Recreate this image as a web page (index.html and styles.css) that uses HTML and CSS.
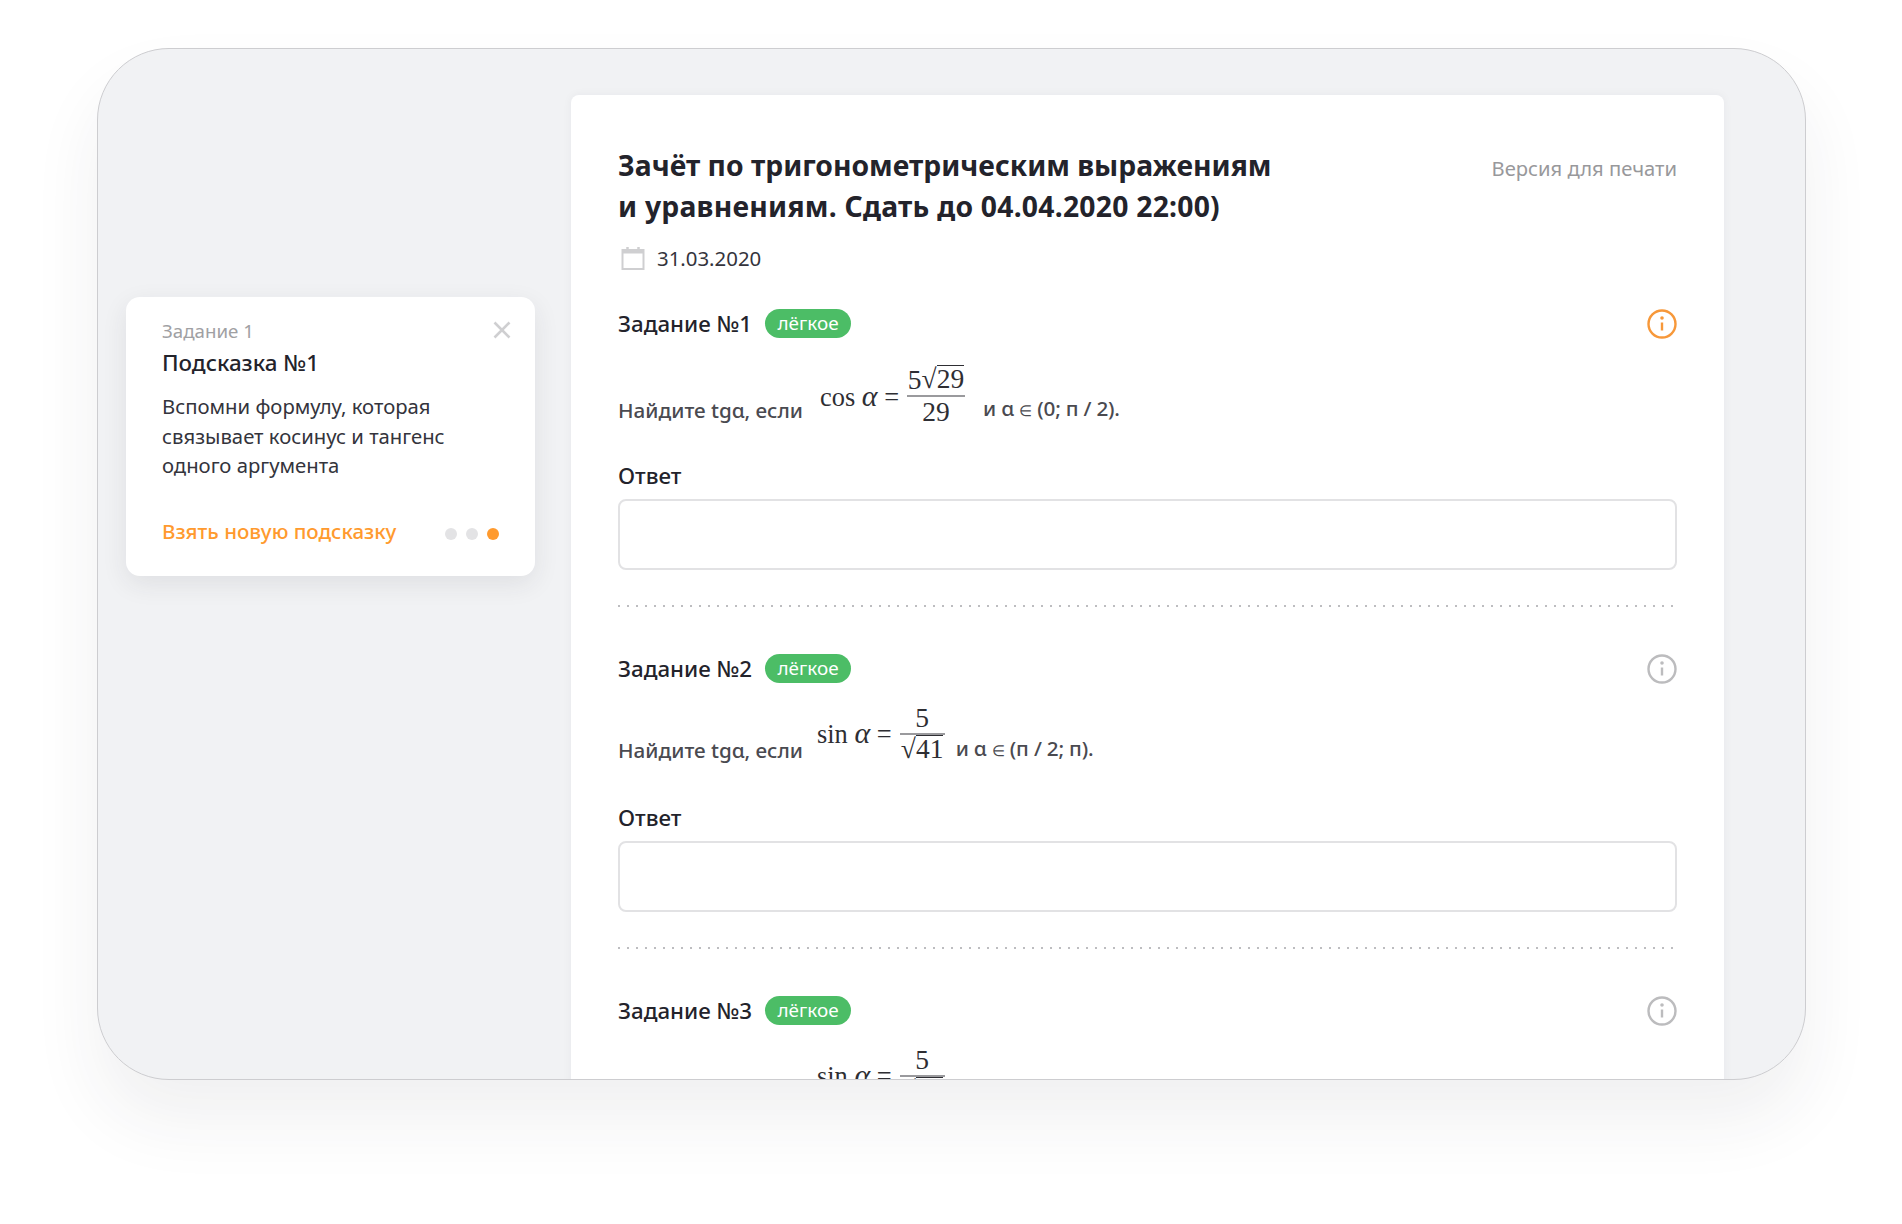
FILE: index.html
```html
<!DOCTYPE html>
<html lang="ru">
<head>
<meta charset="utf-8">
<title>Зачёт</title>
<link rel="stylesheet" href="styles.css">
</head>
<body>
<div class="frame">
  <aside class="side">
    <div class="hint">
      <div class="hint-top">
        <div class="hint-sub">Задание 1</div>
        <svg class="close" viewBox="0 0 18 18"><path d="M1.5 1.5l15 15M16.500 1.500l-15 15"/></svg>
      </div>
      <div class="hint-title">Подсказка №1</div>
      <p class="hint-text">Вспомни формулу, которая<br>связывает косинус и тангенс<br>одного аргумента</p>
      <div class="hint-foot">
        <span class="hint-link">Взять новую подсказку</span>
        <span class="dots"><i class="dot"></i><i class="dot"></i><i class="dot on"></i></span>
      </div>
    </div>
  </aside>
  <main class="panel">
    <header class="head">
      <h1 class="title">Зачёт по тригонометрическим выражениям<br><span class="title-second">и уравнениям. Сдать до 04.04.2020 22:00)</span></h1>
      <span class="print">Версия для печати</span>
    </header>
    <div class="date">
      <svg class="cal" viewBox="0 0 24 24"><path d="M1.500 4h21v19h-21z" class="cal-body"/><path d="M1.500 6h21" class="cal-band"/><path d="M6.500 1v4.500M17.500 1v4.500" class="cal-ring"/></svg>
      <span>31.03.2020</span>
    </div>

    <section class="task first">
      <div class="task-head">
        <span class="task-name">Задание №1</span><span class="badge">лёгкое</span>
        <svg class="info orange" viewBox="0 0 30 30"><circle cx="15" cy="15" r="13.500"/><path d="M15 13.500v8"/><circle class="info-dot" cx="15" cy="9" r="1.800"/></svg>
      </div>
      <div class="problem p1">
        <span class="ptext w1">Найдите tgα, если</span>
        <span class="formula f1">
          <span class="fn">cos <em>α</em> =</span>
          <span class="frac"><span class="num">5<span class="root">√</span><span class="rad">29</span></span><span class="den">29</span></span>
        </span>
        <span class="ptext w2">и α <span class="el">∈</span> (0; п / 2).</span>
      </div>
      <div class="label">Ответ</div>
      <div class="input"></div>
    </section>

    <section class="task">
      <div class="task-head">
        <span class="task-name">Задание №2</span><span class="badge">лёгкое</span>
        <svg class="info" viewBox="0 0 30 30"><circle cx="15" cy="15" r="13.500"/><path d="M15 13.500v8"/><circle class="info-dot" cx="15" cy="9" r="1.800"/></svg>
      </div>
      <div class="problem p2">
        <span class="ptext w3">Найдите tgα, если</span>
        <span class="formula f2">
          <span class="fn">sin <em>α</em> =</span>
          <span class="frac"><span class="num">5</span><span class="den"><span class="root">√</span><span class="rad">41</span></span></span>
        </span>
        <span class="ptext w4">и α <span class="el">∈</span> (п / 2; п).</span>
      </div>
      <div class="label">Ответ</div>
      <div class="input"></div>
    </section>

    <section class="task">
      <div class="task-head">
        <span class="task-name">Задание №3</span><span class="badge">лёгкое</span>
        <svg class="info" viewBox="0 0 30 30"><circle cx="15" cy="15" r="13.500"/><path d="M15 13.500v8"/><circle class="info-dot" cx="15" cy="9" r="1.800"/></svg>
      </div>
      <div class="problem p2">
        <span class="ptext w3">&nbsp;</span>
        <span class="formula f2">
          <span class="fn">sin <em>α</em> =</span>
          <span class="frac"><span class="num">5</span><span class="den"><span class="root">√</span><span class="rad">41</span></span></span>
        </span>
      </div>
    </section>
  </main>
</div>
</body>
</html>
```

FILE: styles.css
```css
* { box-sizing: border-box; }
html, body { margin: 0; padding: 0; }
body {
  width: 1902px;
  height: 1224px;
  background: #fff;
  font-family: "Noto Sans", "Open Sans", sans-serif;
  color: #23232b;
  overflow: hidden;
  padding: 48px 0 0 97px;
}
.frame {
  width: 1709px;
  height: 1032px;
  background: #f1f2f4;
  border: 1px solid #cdcdd0;
  border-radius: 72px;
  box-shadow: 0 40px 70px rgba(40, 44, 60, .07);
  overflow: hidden;
  display: flex;
}
.side {
  width: 473px;
  padding: 248px 0 0 28px;
  flex: none;
}
.hint {
  width: 409px;
  height: 279px;
  background: #fff;
  border-radius: 14px;
  box-shadow: 0 8px 26px rgba(40, 44, 60, .09);
  padding: 22px 36px 0;
}
.hint-top {
  display: flex;
  justify-content: space-between;
  align-items: flex-start;
}
.hint-sub {
  font-size: 18.700px;
  line-height: 24px;
  color: #a0a0a3;
}
.close {
  width: 18px;
  height: 18px;
  margin: 2px -12px 0 0;
  flex: none;
}
.close path {
  fill: none;
  stroke: #cfcfd1;
  stroke-width: 2.600;
}
.hint-title {
  font-size: 22.400px;
  font-weight: 500;
  line-height: 30px;
  margin-top: 5px;
}
.hint-text {
  margin: 14px 0 0;
  font-size: 20.300px;
  line-height: 29.600px;
  color: #34343c;
}
.hint-foot {
  display: flex;
  justify-content: space-between;
  align-items: center;
  margin-top: 35px;
}
.hint-link {
  font-size: 20.500px;
  font-weight: 500;
  line-height: 30px;
  color: #ff9a2e;
}
.dots {
  display: flex;
  gap: 9px;
  margin: 6px 0 0;
}
.dot {
  display: block;
  width: 12px;
  height: 12px;
  border-radius: 50%;
  background: #e3e3e5;
}
.dot.on { background: #ff9a2e; }
.panel {
  width: 1153px;
  height: 1100px;
  margin-top: 46px;
  flex: none;
  background: #fff;
  border-radius: 8px 8px 0 0;
  box-shadow: 0 0 10px rgba(40, 44, 60, .05);
  padding: 50px 47px 0;
}
.head {
  display: flex;
  justify-content: space-between;
  align-items: flex-start;
}
.title {
  margin: 0;
  font-size: 28.300px;
  line-height: 41px;
  font-weight: 700;
}
.title-second { letter-spacing: .24px; }
.print {
  font-size: 20.200px;
  line-height: 28px;
  color: #98989b;
  margin-top: 9px;
}
.date {
  display: flex;
  align-items: center;
  gap: 12px;
  margin-top: 19px;
  height: 24px;
  font-size: 20.400px;
  padding-left: 3px;
  color: #34343c;
}
.cal {
  width: 24px;
  height: 24px;
  flex: none;
}
.cal-body, .cal-band, .cal-ring {
  fill: none;
  stroke: #cfcfd1;
  stroke-width: 2;
}
.cal-band { stroke-width: 3; }
.cal-ring { stroke-width: 2.500; }
.task { margin-top: 48px; }
.task.first { margin-top: 39px; padding-bottom: 35px; }
.task + .task {
  background: linear-gradient(to right, #bdbdc0 2px, transparent 2px) 0 0 / 9px 2px repeat-x;
  padding: 49px 0 35px;
  margin-top: 0;
}
.task-head {
  display: flex;
  align-items: center;
  height: 29px;
}
.task-name {
  font-size: 22.300px;
  font-weight: 500;
}
.badge {
  margin-left: 13px;
  width: 86px;
  height: 29px;
  border-radius: 15px;
  background: #4cbd66;
  color: #fff;
  font-size: 18.900px;
  line-height: 28px;
  text-align: center;
}
.info {
  margin-left: auto;
  width: 30px;
  height: 30px;
  flex: none;
}
.info circle, .info path {
  fill: none;
  stroke: #bcbcbe;
  stroke-width: 2.400;
}
.info .info-dot {
  fill: #bcbcbe;
  stroke: none;
}
.info.orange circle, .info.orange path { stroke: #f7983a; }
.info.orange .info-dot { fill: #f7983a; stroke: none; }
.problem {
  display: flex;
  align-items: flex-end;
  color: #45454b;
}
.p1 { height: 62px; margin: 27px 0 35px; }
.p2 { height: 60px; margin: 20px 0 41px; }
.ptext {
  font-size: 20.700px;
  font-weight: 500;
  line-height: 26px;
  flex: none;
  color: #4a4a50;
}
.el { font-size: 15px; }
.w1 { width: 202px; margin-bottom: 4px; }
.w2 { margin-left: 18px; margin-bottom: 4px; letter-spacing: -.2px; }
.w3 { width: 199px; margin-bottom: 0; }
.w4 { margin-left: 11px; margin-bottom: 0; letter-spacing: -.2px; }
.formula {
  display: flex;
  align-self: flex-start;
  align-items: center;
  font-family: "Liberation Serif", serif;
  font-size: 26.400px;
  color: #2e2e33;
  flex: none;
}
.f1 { height: 62px; }
.f2 { height: 60px; }
.fn { margin-right: 8px; white-space: nowrap; }
.fn em { font-size: 30px; }
.frac {
  display: flex;
  flex-direction: column;
  align-items: center;
  font-size: 27.500px;
  line-height: 30px;
}
.num { border-bottom: 2px solid #9a9a9d; display: flex; justify-content: center; width: 100%; }
.den { display: flex; justify-content: center; }
.f1 .frac { width: 58px; }
.f2 .frac { width: 45px; }
.rad { border-top: 1px solid #2e2e33; line-height: 26px; }
.root { line-height: 28px; }
.label {
  font-size: 22.300px;
  font-weight: 500;
  line-height: 28px;
}
.input {
  margin-top: 9px;
  height: 71px;
  background: #fff;
  border: 2px solid #e2e2e4;
  border-radius: 8px;
}
```
